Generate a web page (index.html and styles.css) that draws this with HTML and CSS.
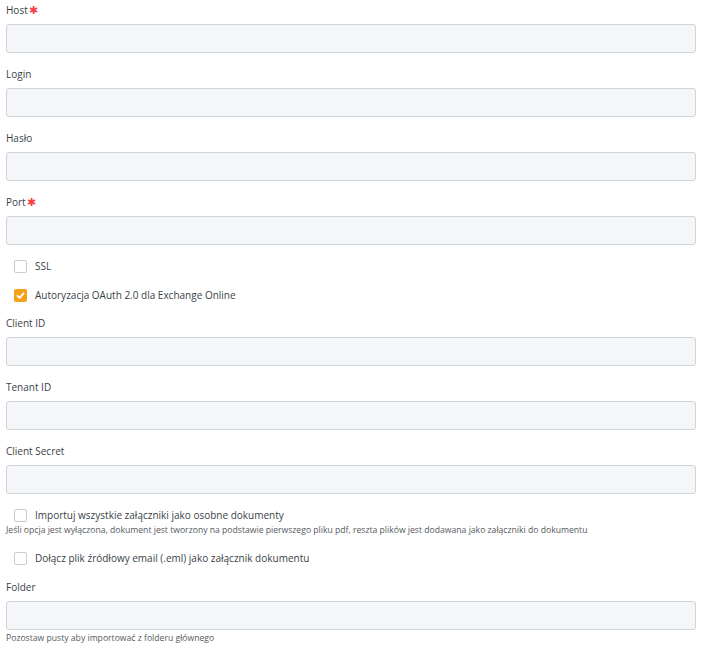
FILE: index.html
```html
<!DOCTYPE html>
<html lang="pl">
<head>
    <meta charset="UTF-8">
    <meta name="viewport" content="width=device-width, initial-scale=1.0">
    <title>Skrzynka pocztowa</title>
    <link rel="stylesheet" href="styles.css">
</head>
<body>
    <form class="mail-form">
        <div class="field">
            <label>Host<span class="req">✱</span></label>
            <input type="text">
        </div>
        <div class="field">
            <label>Login</label>
            <input type="text">
        </div>
        <div class="field">
            <label>Hasło</label>
            <input type="password">
        </div>
        <div class="field">
            <label>Port<span class="req">✱</span></label>
            <input type="text">
        </div>

        <!-- opcje połączenia -->
        <div class="check">
            <span class="box"></span>
            <span>SSL</span>
        </div>
        <div class="check before-field">
            <span class="box checked">
                <svg viewBox="0 0 13 13" width="13" height="13"><path d="M3.5 6.8 L5.6 8.8 L9.6 4.4" fill="none" stroke="#fff" stroke-width="1.8" stroke-linecap="round" stroke-linejoin="round"/></svg>
            </span>
            <span>Autoryzacja OAuth 2.0 dla Exchange Online</span>
        </div>

        <div class="field">
            <label>Client ID</label>
            <input type="text">
        </div>
        <div class="field">
            <label>Tenant ID</label>
            <input type="text">
        </div>
        <div class="field">
            <label>Client Secret</label>
            <input type="text">
        </div>

        <!-- import załączników -->
        <div class="check tight">
            <span class="box"></span>
            <span>Importuj wszystkie załączniki jako osobne dokumenty</span>
        </div>
        <p class="hint under-check">Jeśli opcja jest wyłączona, dokument jest tworzony na podstawie pierwszego pliku pdf, reszta plików jest dodawana jako załączniki do dokumentu</p>
        <div class="check">
            <span class="box"></span>
            <span>Dołącz plik źródłowy email (.eml) jako załącznik dokumentu</span>
        </div>

        <div class="field last">
            <label>Folder</label>
            <input type="text">
            <p class="hint">Pozostaw pusty aby importować z folderu głównego</p>
        </div>
    </form>
</body>
</html>
```

FILE: styles.css
```css
body {
    margin: 0;
    padding: 0 5px 0 6px;
    background: #fff;
    font-family: "Open Sans", "Noto Sans", sans-serif;
    font-size: 10px;
    color: #3a3f47;
}
.mail-form {
    display: flex;
    flex-direction: column;
}
.field {
    display: flex;
    flex-direction: column;
    margin-bottom: 11px;
}
.field label {
    display: block;
    height: 20px;
    line-height: 20px;
    margin-bottom: 4px;
}
.req {
    color: #f5404b;
    font-size: 11px;
    margin-left: 1px;
}
.field input {
    box-sizing: border-box;
    width: 100%;
    height: 29px;
    margin: 0;
    border: 1px solid #cfd3da;
    border-radius: 3px;
    background: #f5f6f8;
}
.check {
    display: flex;
    align-items: center;
    height: 20px;
    margin-bottom: 9px;
    padding-left: 8px;
    gap: 8px;
}
.check.before-field {
    margin-bottom: 8px;
}
.check.tight {
    margin-bottom: 0;
}
.box {
    box-sizing: border-box;
    width: 13px;
    height: 13px;
    border: 1px solid #c8ccd3;
    border-radius: 2px;
    background: #fff;
    display: flex;
}
.box.checked {
    border: none;
    background: #f7a11a;
}
.hint {
    margin: 0;
    font-size: 8.65px;
    line-height: 10px;
    color: #555a61;
}
.under-check {
    margin-bottom: 13px;
}
.field .hint {
    margin-top: 3px;
}
```
